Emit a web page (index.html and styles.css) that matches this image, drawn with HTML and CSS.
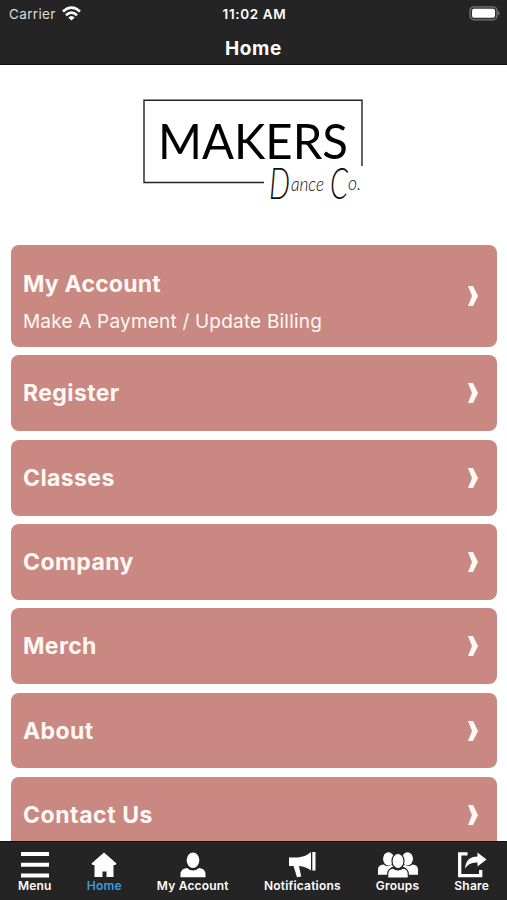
FILE: index.html
```
<!DOCTYPE html>
<html lang="en">
<head>
<meta charset="utf-8">
<title>Home</title>
<link rel="stylesheet" href="styles.css">
</head>
<body>
<div class="app">
  <header class="top">
    <div class="status">
      <div class="carrier"><span>Carrier</span>
        <svg class="wifi" width="19" height="15" viewBox="0 0 19 15" fill="none" stroke="#fff" stroke-width="2.700"><path d="M1 5.600Q9.500-2.200 18 5.600"/><path d="M4 9.200Q9.500 4 15 9.200"/><path d="M6.300 11.400Q9.500 8.400 12.700 11.400L9.500 14.500z" fill="#fff" stroke="none"/></svg>
      </div>
      <span class="clock">11:02 AM</span>
      <svg class="battery" width="31" height="15" viewBox="0 0 31 15"><rect x="1" y=".8" width="27" height="13" rx="4" fill="#303030" stroke="#777" stroke-width="1.300"/><rect x="3" y="2.800" width="23" height="9" rx="2" fill="#fff"/><path d="M29 5q3 2.300 0 4.600z" fill="#777"/></svg>
    </div>
    <h1>Home</h1>
  </header>
  <main>
    <svg class="logo" width="227" height="116" viewBox="140 95 227 116">
      <path d="M264 182.500H144V100.200H362V166" fill="none" stroke="#222" stroke-width="1.400"/>
      <text class="brand" x="158" y="158.500" textLength="190" lengthAdjust="spacingAndGlyphs">MAKERS</text>
      <g class="script">
        <text class="initial" x="269" y="199" textLength="21" lengthAdjust="spacingAndGlyphs">D</text>
        <text x="291" y="191" textLength="33" lengthAdjust="spacingAndGlyphs">ance</text>
        <text class="initial" x="330" y="199" textLength="18" lengthAdjust="spacingAndGlyphs">C</text>
        <text x="348" y="190" textLength="13" lengthAdjust="spacingAndGlyphs">o.</text>
      </g>
    </svg>
    <div class="list">
      <a class="card tall"><div><h2>My Account</h2><p>Make A Payment / Update Billing</p></div><svg class="chev" viewBox="0 0 10 20"><path d="M0 0h5l5 10-5 10H0l4-10z"/></svg></a>
      <a class="card"><h2>Register</h2><svg class="chev" viewBox="0 0 10 20"><path d="M0 0h5l5 10-5 10H0l4-10z"/></svg></a>
      <a class="card"><h2>Classes</h2><svg class="chev" viewBox="0 0 10 20"><path d="M0 0h5l5 10-5 10H0l4-10z"/></svg></a>
      <a class="card"><h2>Company</h2><svg class="chev" viewBox="0 0 10 20"><path d="M0 0h5l5 10-5 10H0l4-10z"/></svg></a>
      <a class="card"><h2>Merch</h2><svg class="chev" viewBox="0 0 10 20"><path d="M0 0h5l5 10-5 10H0l4-10z"/></svg></a>
      <a class="card"><h2>About</h2><svg class="chev" viewBox="0 0 10 20"><path d="M0 0h5l5 10-5 10H0l4-10z"/></svg></a>
      <a class="card contact"><h2>Contact Us</h2><svg class="chev" viewBox="0 0 10 20"><path d="M0 0h5l5 10-5 10H0l4-10z"/></svg></a>
    </div>
  </main>
  <nav>
    <a><svg width="28" height="26" viewBox="0 0 28 26"><path d="M0 0h28v4H0zM0 10.700h28v4H0zM0 21.400h28v4H0z"/></svg><span>Menu</span></a>
    <a class="active"><svg width="26" height="26" viewBox="0 0 26 26"><path d="M13 .5 25.500 11.500 24.500 13H22.500V25H15.500v-5.500h-4V25H3.500V13H1.500L.5 11.500z"/></svg><span>Home</span></a>
    <a><svg width="26" height="26" viewBox="0 0 26 26"><ellipse cx="13" cy="8.200" rx="6.300" ry="7.700"/><path d="M.5 25.200V22c0-4 3.500-5.700 6.500-6q6 5 12 0c3 .3 6.500 2 6.500 6v3.200z"/></svg><span>My Account</span></a>
    <a><svg width="27" height="26" viewBox="0 0 27 26"><path d="M0 5.500h9Q17 4.500 22 0v18.500Q17 14.500 10 14l2.200 10.500-4.200.7L4.500 14H0zM23.300 0H26.500v18.500h-3.200z"/></svg><span>Notifications</span></a>
    <a><svg width="40" height="26" viewBox="0 0 40 26"><g id="side"><ellipse cx="10.500" cy="6.800" rx="5.500" ry="6.600"/><path d="M0 22.800V17.500q0-4.500 5.500-5 4 3 8 0l2 2Q10 16 9.500 22.800z"/></g><use href="#side" transform="matrix(-1 0 0 1 40 0)"/><g stroke="#242424" stroke-width="1.200"><ellipse cx="20" cy="9" rx="6" ry="7.500"/><path d="M9.700 26V22q0-5 5.300-6 5 4 10 0 5.300 1 5.300 6v4z"/></g></svg><span>Groups</span></a>
    <a><svg width="30" height="26" viewBox="0 0 30 26"><path d="M10.500 1.900H2.700v21.700h21V18" fill="none" stroke="#fff" stroke-width="3.300"/><path d="M8 16.500Q9 4.500 20.500 4.500V.5L29.500 7.500 20.500 14.500v-4Q12 10 8 16.500z"/></svg><span>Share</span></a>
  </nav>
</div>
</body>
</html>
```
FILE: styles.css
```
* { box-sizing: border-box; }
body { margin: 0; background: #fff; font-family: Inter, "Liberation Sans", sans-serif; }
.app { height: 900px; display: flex; flex-direction: column; overflow: hidden; }
.top { height: 65px; flex: none; background: #242424; color: #fff; border-bottom: 1px solid #111; }
.status { height: 28px; padding: 0 7px 0 9px; display: grid; grid-template-columns: 1fr auto 1fr; align-items: center; font-size: 13.500px; }
.carrier { display: flex; align-items: center; gap: 6px; color: #ddd; letter-spacing: .35px; }
.wifi { display: block; margin-top: -2px; }
.clock { font-weight: 600; font-size: 13.500px; letter-spacing: .65px; }
.battery { justify-self: end; margin-top: -1px; }
h1 { margin: 8px 0 0; text-align: center; font-size: 19px; line-height: 25px; font-weight: 700; letter-spacing: .6px; }
main { flex: 1; min-height: 0; overflow: hidden; }
.logo { display: block; margin: 30px 0 0 140px; }
.brand { font-family: Lato, sans-serif; font-size: 49px; fill: #000; }
.script { font-family: "Z003", "URW Chancery L", Lato, cursive; font-size: 20px; font-style: italic; font-weight: 300; fill: #111; }
.initial { font-size: 44px; }
.list { margin-top: 34.300px; padding: 0 10px 0 11px; display: flex; flex-direction: column; gap: 8.500px; }
.card { height: 75.800px; flex: none; padding: 0 19px 0 12px; border-radius: 8px; background: #c98882; color: #fff8f3; display: flex; align-items: center; justify-content: space-between; }
.tall { height: 101.700px; }
.tall div { padding-top: 12px; }
.tall h2 { letter-spacing: .2px; }
h2 { margin: 0; font-size: 23px; line-height: 30px; font-weight: 700; letter-spacing: .4px; }
p { margin: 10px 0 0; font-size: 19px; line-height: 26px; letter-spacing: .2px; }
.contact h2 { letter-spacing: .55px; }
.chev { width: 10px; height: 20px; fill: #fffaf4; }
nav { height: 59px; flex: none; padding: 10px 18px 0; display: flex; justify-content: space-between; background: #242424; color: #fff; border-top: 1px solid #111; }
nav a { display: flex; flex-direction: column; align-items: center; font-size: 12px; line-height: 15px; font-weight: 600; letter-spacing: .2px; }
nav svg { display: block; fill: #fff; }
.active span { color: #3c9cdc; }
```
